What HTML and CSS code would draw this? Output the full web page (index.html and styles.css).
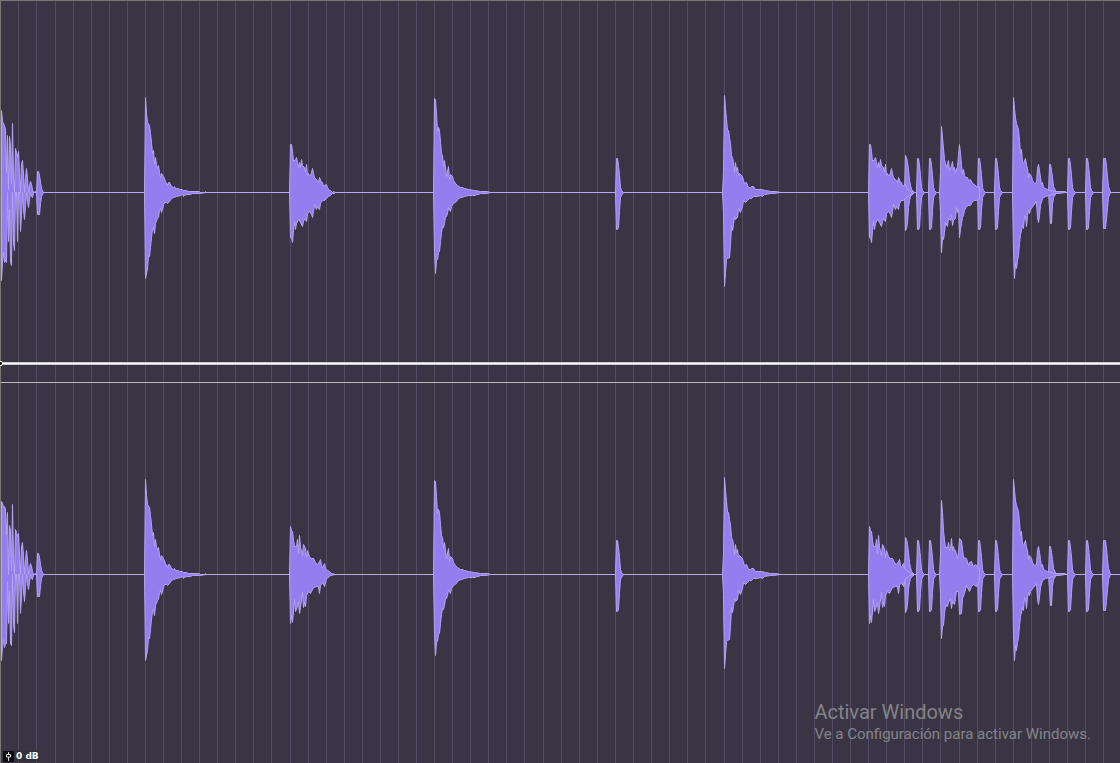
FILE: index.html
```html
<!DOCTYPE html>
<html lang="es">

<head>
<title>Audio editor</title>
<meta charset="UTF-8">
<meta name="viewport" content="width=device-width, initial-scale=1.0">
<link rel="stylesheet" href="styles.css">
</head>

<body>
<!-- Shared shapes, y = 0 is the zero crossing of the channel -->
<svg class="defs" aria-hidden="true">
<defs>
<path id="grid" d="M18-200V200M36-200V200M55-200V200M73-200V200M91-200V200M109-200V200M127-200V200M145-200V200M163-200V200M181-200V200M199-200V200M217-200V200M235-200V200M253-200V200M271-200V200M290-200V200M308-200V200M326-200V200M344-200V200M362-200V200M380-200V200M398-200V200M416-200V200M434-200V200M452-200V200M470-200V200M488-200V200M506-200V200M524-200V200M543-200V200M561-200V200M579-200V200M597-200V200M615-200V200M633-200V200M651-200V200M669-200V200M687-200V200M705-200V200M724-200V200M742-200V200M760-200V200M778-200V200M796-200V200M814-200V200M832-200V200M850-200V200M868-200V200M886-200V200M904-200V200M922-200V200M940-200V200M959-200V200M977-200V200M995-200V200M1013-200V200M1031-200V200M1049-200V200M1067-200V200M1085-200V200M1103-200V200"/>
<path id="tick" d="M36 0L37-21 38-21 39-17 40-10 41-4 42-2 43 0 42 2 41 4 40 11 39 22 37 22Z"/>
<path id="ping" d="M615 0L616-34 617-34 618-27 619-17 620-5 621-2 623 0 621 3 620 5 619 18 618 35 617 37 616 37Z"/>
<path id="kick1" d="M144 0L145-95 146-79 147-70 149-67 150-59 151-50 152-39 153-42 154-28 155-35 156-28 157-24 158-27 159-20 160-15 161-19 163-16 165-11 167-7 168-10 169-10 171-6 173-5 174-6 175-4 177-4 180-3 182-3 183-2 186-2 188-1 199-1 200 0 204 0 205-1 206 0 199 1 192 1 190 2 186 2 184 3 183 4 182 2 180 3 176 4 173 5 171 6 169 9 167 11 166 10 164 10 163 13 161 20 160 16 159 18 158 25 157 26 155 31 154 41 153 35 152 37 151 45 150 55 149 64 148 63 147 76 145 86Z"/>
<path id="kick2" d="M433 0L434-94 435-93 436-78 437-61 438-65 439-62 440-50 441-39 442-37 443-26 444-32 446-16 448-26 449-13 450-18 452-16 453-12 455-9 457-7 460-5 462-5 464-4 468-3 474-2 480-1 487-1 490 0 486 1 480 1 478 2 476 2 475 3 472 3 468 3 464 4 461 5 458 6 456 9 453 11 451 14 450 19 448 15 447 21 446 24 445 24 444 31 443 35 442 34 441 40 440 49 439 59 438 60 437 67 436 68 435 81 434 60Z"/>
<path id="kick3" d="M722 0L723-20 724-97 725-84 726-73 727-62 728-62 729-55 730-49 731-37 732-35 733-30 734-20 735-30 736-22 737-25 738-17 739-19 742-16 743-12 744-9 746-10 748-5 750-5 751-6 753-6 755-3 758-3 761-3 765-2 770-1 776-1 780 0 773 1 770 1 764 2 762 4 760 3 757 4 753 4 751 6 749 6 747 8 745 10 743 8 742 14 740 20 738 16 737 25 735 27 734 24 733 32 732 38 731 33 730 52 729 65 727 66 726 67 725 80 724 94 723 20Z"/>
<path id="kick4" d="M1012 0L1013-95 1014-84 1015-74 1016-69 1018-63 1019-52 1020-39 1021-43 1022-30 1023-29 1025-34 1026-27 1027-24 1028-15 1029-19 1031-16 1032-12 1034-9 1036-10 1037-24 1038-28 1039-22 1040-15 1041-8 1042-10 1043-5 1045-4 1047-3 1049-2 1055-1 1065-1 1065 0 1058 1 1055 1 1049 3 1045 4 1042 6 1040 13 1039 23 1038 30 1037 25 1036 9 1033 13 1030 17 1029 21 1028 18 1027 23 1026 34 1025 24 1024 23 1023 36 1022 33 1020 42 1019 51 1018 63 1017 68 1016 76 1015 71 1014 86 1013 60Z"/>
<path id="snare-left" d="M289 0L290-48 291-48 292-41 293-31 295-33 296-35 297-30 298-25 299-30 300-25 301-33 302-27 304-25 305-21 306-28 307-17 308-19 309-17 310-17 311-20 312-24 313-19 314-15 316-13 318-10 319-15 321-10 322-10 323-6 324-7 326-8 327-5 329-2 330-2 332 0 333-1 335 0 334 1 332 1 330 3 328 4 326 6 324 8 322 8 320 11 319 17 317 14 316 17 314 12 313 19 312 25 311 22 309 19 307 21 306 29 304 26 303 29 302 34 300 30 298 27 296 31 295 37 294 29 293 38 292 50 291 45 290 45Z"/>
<path id="snare-right" d="M289 0L290-48 291-44 292-43 293-34 294-28 296-28 297-35 298-21 299-39 300-27 301-24 302-19 303-30 305-26 306-17 307-24 308-21 309-18 311-16 313-16 315-12 317-10 319-13 320-15 321-9 322-7 324-11 325-6 327-4 329-3 331-1 335 0 330 1 328 3 326 4 324 12 322 8 320 11 319 19 318 12 316 12 313 13 311 17 310 19 308 17 306 21 305 32 304 28 303 33 302 18 300 33 299 39 298 28 296 35 295 37 294 25 292 48 291 41 290 49Z"/>
<g id="pings">
<use href="#ping"/>
<path d="M904 0L905-37 906-35 907-30 908-22 909-12 910-7 911-3 914 0 912 2 910 4 909 8 908 15 907 30 906 36 905 38Z"/>
<use href="#ping" x="301"/>
<use href="#ping" x="313"/>
<use href="#ping" x="362"/>
<use href="#ping" x="379"/>
<path d="M1048 0L1049-28 1050-28 1051-22 1052-15 1053-6 1055-2 1057 0 1055 2 1053 5 1052 12 1051 31 1050 31Z"/>
<use href="#ping" x="452"/>
<use href="#ping" x="470"/>
<path d="M1102 0L1103-34 1105-34 1106-26 1107-15 1108-6 1110 0 1108 5 1107 15 1106 26 1105 36 1103 36Z"/>
</g>
</defs>
</svg>

<main class="editor">
<section class="channel" aria-label="Left channel">
<svg class="wave" viewBox="1 -191 1119 381" preserveAspectRatio="none">
<g transform="translate(.5 .5)">
<use class="grid" href="#grid"/>
<path class="zero" d="M1 0H1120"/>
<path d="M1 0V-82L2-71 3-69 4-67 5-63 6-20 7-57 8-3 9-56 10-46 11-9 12-69 13-15 14 0 15-44 16-40 17-36 18-41 19-20 20 0 21-28 22-32 23-18 24 0 25-15 26-24 27-14 28 0 29-7 30-11 31-8 32-3 33 0 35-1 35 0 33 0 32 5 31 4 30 0 28 15 27 9 26 0 25 13 24 27 23 17 22 0 21 22 20 39 19 0 18 0 17 49 16 0 15 0 14 58 13 50 12 0 11 73 10 70 9 17 8 49 7 0 6 70 5 68 4 70 3 60 2 70 1 88Z"/>
<use href="#tick"/>
<use href="#pings"/>
<use href="#kick1"/>
<use href="#snare-left"/>
<use href="#kick2"/>
<use href="#kick3"/>
<use href="#snare-left" x="579"/>
<path d="M939 0L940-20 941-66 942-55 943-44 944-33 945-29 946-25 947-29 948-32 949-22 950-24 951-27 952-31 953-22 954-25 955-20 957-26 958-37 959-48 960-39 961-27 962-19 963-23 964-17 965-15 967-15 968-12 970-13 972-9 974-8 976-6 979-5 979 6 976 8 974 8 972 9 970 13 968 13 966 14 964 18 963 23 962 25 961 31 960 37 959 45 958 17 957 20 956 15 955 26 953 28 952 33 951 23 950 28 948 26 947 34 945 30 944 40 943 47 942 45 941 60 940 20Z"/>
<use href="#kick4"/>
</g>
</svg>
<div class="envelope"></div>
</section>

<section class="channel" aria-label="Right channel">
<svg class="wave" viewBox="1 -191 1119 380" preserveAspectRatio="none">
<g transform="translate(.5 .5)">
<use class="grid" href="#grid"/>
<path class="zero" d="M1 0H1120"/>
<path d="M1 0V-73L2-71 3-67 4-68 5-65 6-40 7-62 8 0 9-49 10-44 11-4 12-70 13-15 14 0 15-45 16-42 17-38 18-41 19-20 20 0 21-28 22-32 23-18 24 0 25-15 26-24 27-14 28 0 29-7 30-11 31-8 32-3 33 0 35-1 35 0 33 0 32 5 31 4 30 0 28 15 27 9 26 0 25 13 24 27 23 17 22 0 21 22 20 39 19 0 18 0 17 49 16 0 15 0 14 58 13 50 12 0 11 71 10 69 9 17 8 49 7 7 6 69 5 69 4 73 3 65 2 72 1 86Z"/>
<use href="#tick"/>
<use href="#pings"/>
<use href="#kick1"/>
<use href="#snare-right"/>
<use href="#kick2"/>
<use href="#kick3"/>
<use href="#snare-right" x="579"/>
<path d="M939 0L940-20 941-74 942-62 943-44 944-34 945-27 947-27 948-32 949-24 950-26 951-36 952-24 953-28 954-24 955-24 957-16 958-22 959-36 961-34 962-25 963-17 966-16 968-9 969-12 971-13 973-8 975-10 977-8 979-5 979 6 976 12 973 10 971 12 969 17 966 11 964 19 962 24 961 39 959 40 958 18 956 16 955 24 954 30 952 27 951 34 950 24 948 28 947 32 945 31 944 39 943 51 942 51 941 64 940 20Z"/>
<use href="#kick4"/>
</g>
</svg>
</section>

<div class="gain">
<svg class="fader" viewBox="0 0 11 11" aria-hidden="true">
<rect width="11" height="11" rx="1" fill="#0c0b10"/>
<path d="M5.5 1V3M5.5 6V10M3.5 3.5H7.5V6H3.5Z" fill="none" stroke="#dedede"/>
</svg>
<span class="gain-value">0 dB</span>
</div>

<aside class="watermark">
<p class="watermark-title">Activar Windows</p>
<p class="watermark-text">Ve a Configuración para activar Windows.</p>
</aside>
</main>
</body>
</html>
```
FILE: styles.css
```css
body {
    margin: 0;
    background-color: #393545;
    font-family: Roboto, "Open Sans", sans-serif;
}
p {
    margin: 0;
}
.defs {
    position: absolute;
    width: 0;
    height: 0;
}
.editor {
    position: relative;
    display: grid;
    grid-template-rows: 382fr 381fr;
    height: 100vh;
    overflow: hidden;
}
.channel {
    position: relative;
    box-sizing: border-box;
    min-height: 0;
    border-top: 1px solid #b9b9bb;
    border-left: 1px solid #777777;
}
.channel:first-child {
    border-top-color: #777777;
}
.wave {
    display: block;
    width: 100%;
    height: 100%;
    fill: #937ef0;
    stroke: #b5a6f2;
    stroke-width: 1;
    stroke-linejoin: bevel;
}
.grid {
    fill: none;
    stroke: #504c63;
}
.zero {
    stroke: #b8a8f8;
}
/* volume envelope, lies over the waveform */
.envelope {
    position: absolute;
    left: 0;
    right: 0;
    bottom: 17px;
    height: 1px;
    border-top: 1px solid #c9c8cc;
    border-bottom: 1px solid #c9c8cc;
    background-color: #ffffff;
}
.envelope::before {
    content: "";
    position: absolute;
    left: -3px;
    top: -2px;
    width: 3px;
    height: 3px;
    border: 1px solid #ffffff;
    border-radius: 2px;
    background-color: #000000;
}
.gain {
    position: absolute;
    left: 3px;
    bottom: 1px;
    display: flex;
    align-items: center;
    gap: 1px;
}
.fader {
    display: block;
    width: 11px;
    height: 11px;
}
.gain-value {
    padding: 0 1px;
    background-color: #34323a;
    color: #ffffff;
    font: bold 9px/12px "DejaVu Sans", sans-serif;
}
.watermark {
    position: absolute;
    right: 29px;
    bottom: 19px;
    color: #858489;
}
.watermark-title {
    font-size: 20px;
    line-height: 24px;
}
.watermark-text {
    font-size: 15px;
    line-height: 20px;
}
```
